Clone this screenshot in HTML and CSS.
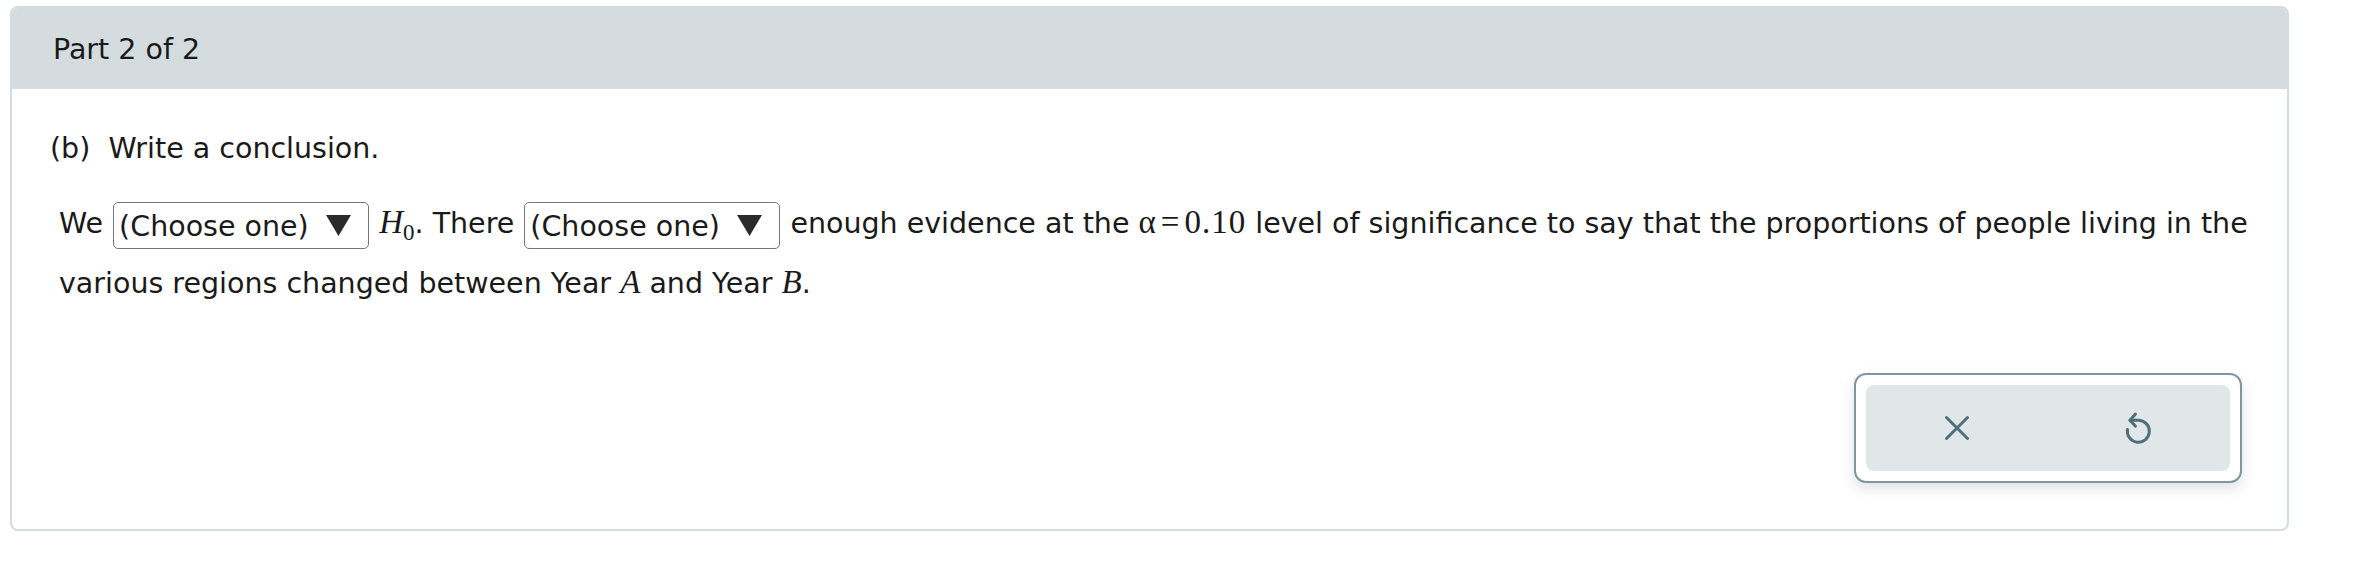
FILE: index.html
```html
<!DOCTYPE html>
<html lang="en">
<head>
<meta charset="utf-8">
<title>Part 2 of 2</title>
<link rel="stylesheet" href="styles.css">
</head>
<body>
<div class="page">
  <section class="card">
    <header class="card-header">Part 2 of 2</header>
    <div class="card-body">
      <h2 class="prompt">(b)&nbsp; Write a conclusion.</h2>
      <p class="answer">We <span class="select"><span class="select-label">(Choose one)</span><svg class="caret" width="25" height="22" viewBox="0 0 25 22"><polygon points="0,1 25,1 12.5,22" /></svg></span> <span class="math"><i>H</i><sub>0</sub></span>. There <span class="select"><span class="select-label">(Choose one)</span><svg class="caret" width="25" height="22" viewBox="0 0 25 22"><polygon points="0,1 25,1 12.5,22" /></svg></span> enough evidence at the <span class="math">α<span class="eq">=</span><span class="num">0.10</span></span> level of significance to say that the proportions of people living in the<br>various regions changed between Year <span class="math"><i>A</i></span> and Year <span class="math"><i>B</i></span>.</p>
      <div class="actions">
        <div class="action-group">
          <div class="action-inner">
            <button class="action" type="button" aria-label="Clear">
              <svg width="48" height="48" viewBox="0 0 48 48"><path d="M13.5 13.5 L34.5 34.5 M34.5 13.5 L13.5 34.5" /></svg>
            </button>
            <button class="action" type="button" aria-label="Undo">
              <svg width="48" height="48" viewBox="0 0 48 48"><path d="M20.5 10 L15 16.2 L20.5 22.2" /><path d="M15 16.2 H23.3 A11 11 0 1 1 12.5 25.4" /></svg>
            </button>
          </div>
        </div>
      </div>
    </div>
  </section>
</div>
</body>
</html>
```

FILE: styles.css
```css
* { box-sizing: border-box; }

body {
  margin: 0;
  background: #ffffff;
  font-family: Verdana, "DejaVu Sans", sans-serif;
  color: #1a1a1a;
}

.page {
  padding: 6px 73px 0 10px;
}

.card {
  border: 2px solid #d5dcdf;
  border-radius: 8px;
  overflow: hidden;
  background: #ffffff;
}

.card-header {
  height: 81px;
  background: #d4dcdf;
  display: flex;
  align-items: center;
  padding: 2px 0 0 41px;
  font-size: 28.5px;
}

.card-body {
  padding: 40px 45px 46px 38px;
}

.prompt {
  margin: 0;
  font-size: 28.5px;
  font-weight: normal;
  line-height: 40px;
}

.answer {
  margin: 25px 0 0;
  padding-left: 9px;
  font-size: 28.5px;
  line-height: 60px;
  white-space: nowrap;
}

.select {
  display: inline-flex;
  align-items: center;
  justify-content: space-between;
  width: 256px;
  height: 47px;
  padding: 0 17px 0 5px;
  border: 1.5px solid #767676;
  border-radius: 5px;
  vertical-align: middle;
  line-height: 1;
  margin: 0 1px;
}

.select-label {
  padding-top: 4px;
}

.caret {
  fill: #2b2b2b;
  flex: none;
}

.math {
  font-family: "Liberation Serif", "Times New Roman", serif;
  font-size: 33px;
  line-height: 1;
}

.math i {
  font-style: italic;
}

.math sub {
  font-size: 23px;
  line-height: 0;
  vertical-align: -7px;
}

.eq {
  margin: 0 5px;
}

.num {
  letter-spacing: 1px;
}

.actions {
  display: flex;
  justify-content: flex-end;
  margin-top: 59px;
}

.action-group {
  width: 388px;
  height: 110px;
  padding: 10px;
  border: 2px solid #7f96a0;
  border-radius: 12px;
  background: #ffffff;
  box-shadow: 0 6px 14px rgba(60, 80, 90, 0.16);
}

.action-inner {
  display: flex;
  height: 100%;
  background: #e1e6e9;
  border-radius: 8px;
}

.action {
  flex: 1;
  display: flex;
  align-items: center;
  justify-content: center;
  background: none;
  border: 0;
  padding: 0;
  cursor: pointer;
}

.action svg {
  fill: none;
  stroke: #4f6f7a;
  stroke-width: 3;
  stroke-linecap: round;
  stroke-linejoin: round;
}
```
